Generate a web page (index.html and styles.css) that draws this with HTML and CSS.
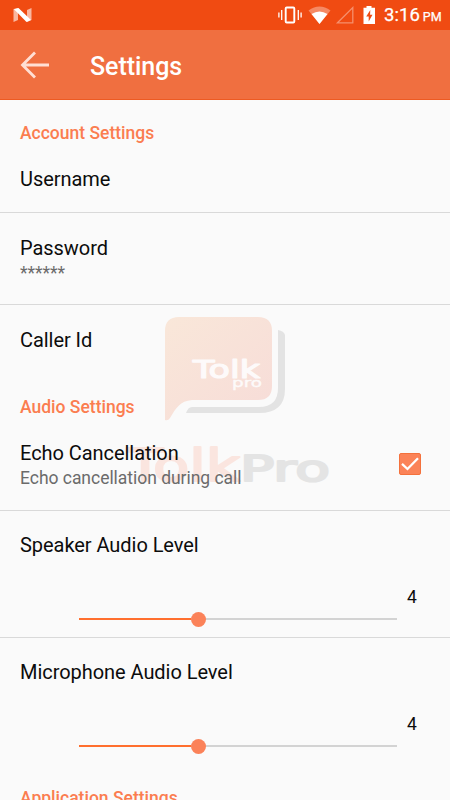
FILE: index.html
```html
<!DOCTYPE html>
<html lang="en">
<head>
<meta charset="utf-8">
<meta name="viewport" content="width=device-width,initial-scale=1">
<title>Settings</title>
<link rel="stylesheet" href="styles.css">
</head>
<body>

<div class="statusbar">
  <svg class="n-logo" width="20" height="16" viewBox="0 0 20 16">
    <path d="M0.5 2L5 1V13L0.5 15ZM14 3L18.500 1V13L14 15Z" fill="#fff" opacity=".6"/>
    <path d="M1 2.300L5.500 1L18 13L13.500 15Z" fill="#fff"/>
  </svg>
  <svg class="status-icons" width="102" height="22" viewBox="0 0 102 22">
    <!-- vibrate -->
    <rect x="8.700" y="3.500" width="8.600" height="15" rx="1" fill="none" stroke="#fff" stroke-width="1.900"/>
    <path d="M4.700 6V16M21.300 6V16M1.900 8.500V13.500M24.100 8.500V13.500" stroke="#fff" stroke-width="1.300"/>
    <!-- wifi -->
    <path d="M31.500 6.500Q42.500 -1.500 53.500 6.500L42.500 20Z" fill="#fff" opacity=".35"/>
    <path d="M34.500 10Q42.500 5 50.500 10L42.500 20Z" fill="#fff"/>
    <!-- no signal -->
    <path d="M60.500 18.800L75.800 3.500V18.800Z" fill="none" stroke="#fff" stroke-width="1.300" opacity=".38"/>
    <!-- battery -->
    <path d="M89.500 2H94.500V3.800H98V20H86.500V3.800H89.500Z" fill="#fff"/>
    <path d="M93.300 6L89.200 12.500H91.700V17.500L95.500 10.800H93.100Z" fill="#ee4b13"/>
  </svg>
  <span class="clock">3:16 <small>PM</small></span>
</div>

<header class="appbar">
  <svg width="30" height="28" viewBox="0 0 30 28">
    <path d="M15 1.500L2.500 14L15 26.500M2.500 14H29" fill="none" stroke="#ffdfd4" stroke-width="2.800"/>
  </svg>
  <h1>Settings</h1>
</header>

<!-- faded logo behind the list -->
<svg class="watermark" width="220" height="180" viewBox="120 310 220 180">
  <defs>
    <linearGradient id="bubble" x1="0" y1="0" x2="1" y2="1">
      <stop offset="0" stop-color="#f9e7d9"/>
      <stop offset="1" stop-color="#f7dcd8"/>
    </linearGradient>
  </defs>
  <path d="M179 317H258Q272 317 272 331V386Q272 400 258 400H192C180 401 176 408 170 418Q168 421 165 420V331Q165 317 179 317Z" fill="url(#bubble)"/>
  <path d="M278 330Q284 331 285 335V389Q285 413 259 413H186Q188 407 192 407H259Q278 407 278 388Z" fill="#e3e3e3"/>
  <text class="wm-logo" x="193" y="378" font-size="25" textLength="67" lengthAdjust="spacingAndGlyphs">Tolk</text>
  <text class="wm-logo wm-small" x="232" y="387" font-size="13" textLength="30" lengthAdjust="spacingAndGlyphs">pro</text>
  <text class="wm-tolk" x="127" y="481" font-size="44" textLength="113" lengthAdjust="spacingAndGlyphs">Tolk</text>
  <text class="wm-pro" x="240" y="481" font-size="35" textLength="90" lengthAdjust="spacingAndGlyphs">Pro</text>
</svg>

<main class="prefs">
  <h2>Account Settings</h2>
  <div class="pref short">
    <div class="title">Username</div>
  </div>
  <div class="pref">
    <div class="title">Password</div>
    <div class="summary">******</div>
  </div>
  <div class="pref last">
    <div class="title">Caller Id</div>
  </div>

  <h2>Audio Settings</h2>
  <div class="pref check-row">
    <div>
      <div class="title">Echo Cancellation</div>
      <div class="summary">Echo cancellation during call</div>
    </div>
    <svg class="check" width="22" height="22" viewBox="0 0 22 22">
      <rect x=".5" y=".5" width="21" height="21" rx="1.500" fill="#fb8358" stroke="#f4713c"/>
      <path d="M3 10.800L8.500 16L19 5.300" fill="none" stroke="#fff" stroke-width="2.300"/>
    </svg>
  </div>
  <div class="pref level">
    <div class="title">Speaker Audio Level</div>
    <div class="value">4</div>
    <div class="slider"><div class="fill"></div><div class="knob"></div></div>
  </div>
  <div class="pref level last">
    <div class="title">Microphone Audio Level</div>
    <div class="value">4</div>
    <div class="slider"><div class="fill"></div><div class="knob"></div></div>
  </div>

  <h2>Application Settings</h2>
</main>

</body>
</html>
```
FILE: styles.css
```css
:root{
  --accent:#fb7d50;
  --line:#d9d9d9;
}
*{box-sizing:border-box}
body{
  margin:0;height:800px;overflow:hidden;position:relative;
  font-family:Roboto,Arial,sans-serif;color:#0c0c0c;background:#fafafa;
}
svg{display:block;flex:none}

/* top bars */
.statusbar{
  height:30px;padding:0 10px 0 13px;display:flex;align-items:center;
  background:#f04b12;color:#fff;
}
.n-logo{margin-top:-1px}
.status-icons{margin-left:auto}
.clock{margin-left:5px;width:56px;font-size:18.5px;line-height:30px;letter-spacing:.1px;white-space:nowrap;padding-top:2px;-webkit-text-stroke:.25px #fff}
.clock small{font-size:12.5px;margin-left:-2px}
.appbar{
  height:70px;padding:0 20px;display:flex;align-items:center;gap:40px;
  background:#f06f40;border-bottom:1px solid #ed5a22;color:#fff;
}
.appbar h1{margin:3px 0 0;font-size:25px;font-weight:500;letter-spacing:-.05px}

/* list */
.prefs{position:relative}
h2{
  margin:0;height:47px;padding:23px 20px 0;
  font-size:17.5px;line-height:21px;font-weight:500;color:var(--accent);
}
.pref{
  height:92px;padding:23px 20px 0;border-bottom:1px solid var(--line);
}
.title{font-size:20px;line-height:24px;letter-spacing:-.05px}
.summary{font-size:17.5px;line-height:21px;margin-top:3px;letter-spacing:-.03px;color:#6b6b6b}
.short{height:66px;padding-top:20px}
.last{height:69px;border-bottom:0}
.check-row{height:90px;padding:20px 29px 0 20px;display:flex;justify-content:space-between}
.check{margin-top:12px}

/* sliders */
.level{height:127px;padding-top:22px}
.value{width:11px;margin:29px 12px 0 auto;font-size:17.5px;line-height:22px}
.slider{
  display:flex;align-items:center;height:16px;margin:3px 33px 0 59px;
  background:linear-gradient(#d3d3d3,#d3d3d3) center/100% 2px no-repeat;
}
.fill{width:112px;height:2px;background:#ff6f2e}
.knob{width:15px;height:15px;border-radius:50%;background:#fb8259}

/* watermark */
.watermark{position:absolute;left:120px;top:310px}
.watermark text{font-family:"DejaVu Sans",sans-serif;stroke-linejoin:round}
.wm-logo{fill:#fdfafa;stroke:#fdfafa;stroke-width:1.2px}
.wm-small{stroke-width:.4px}
.wm-tolk{fill:#fae5df;stroke:#fae5df;stroke-width:2px}
.wm-pro{fill:#e4e4e4;stroke:#e4e4e4;stroke-width:2px}
```
